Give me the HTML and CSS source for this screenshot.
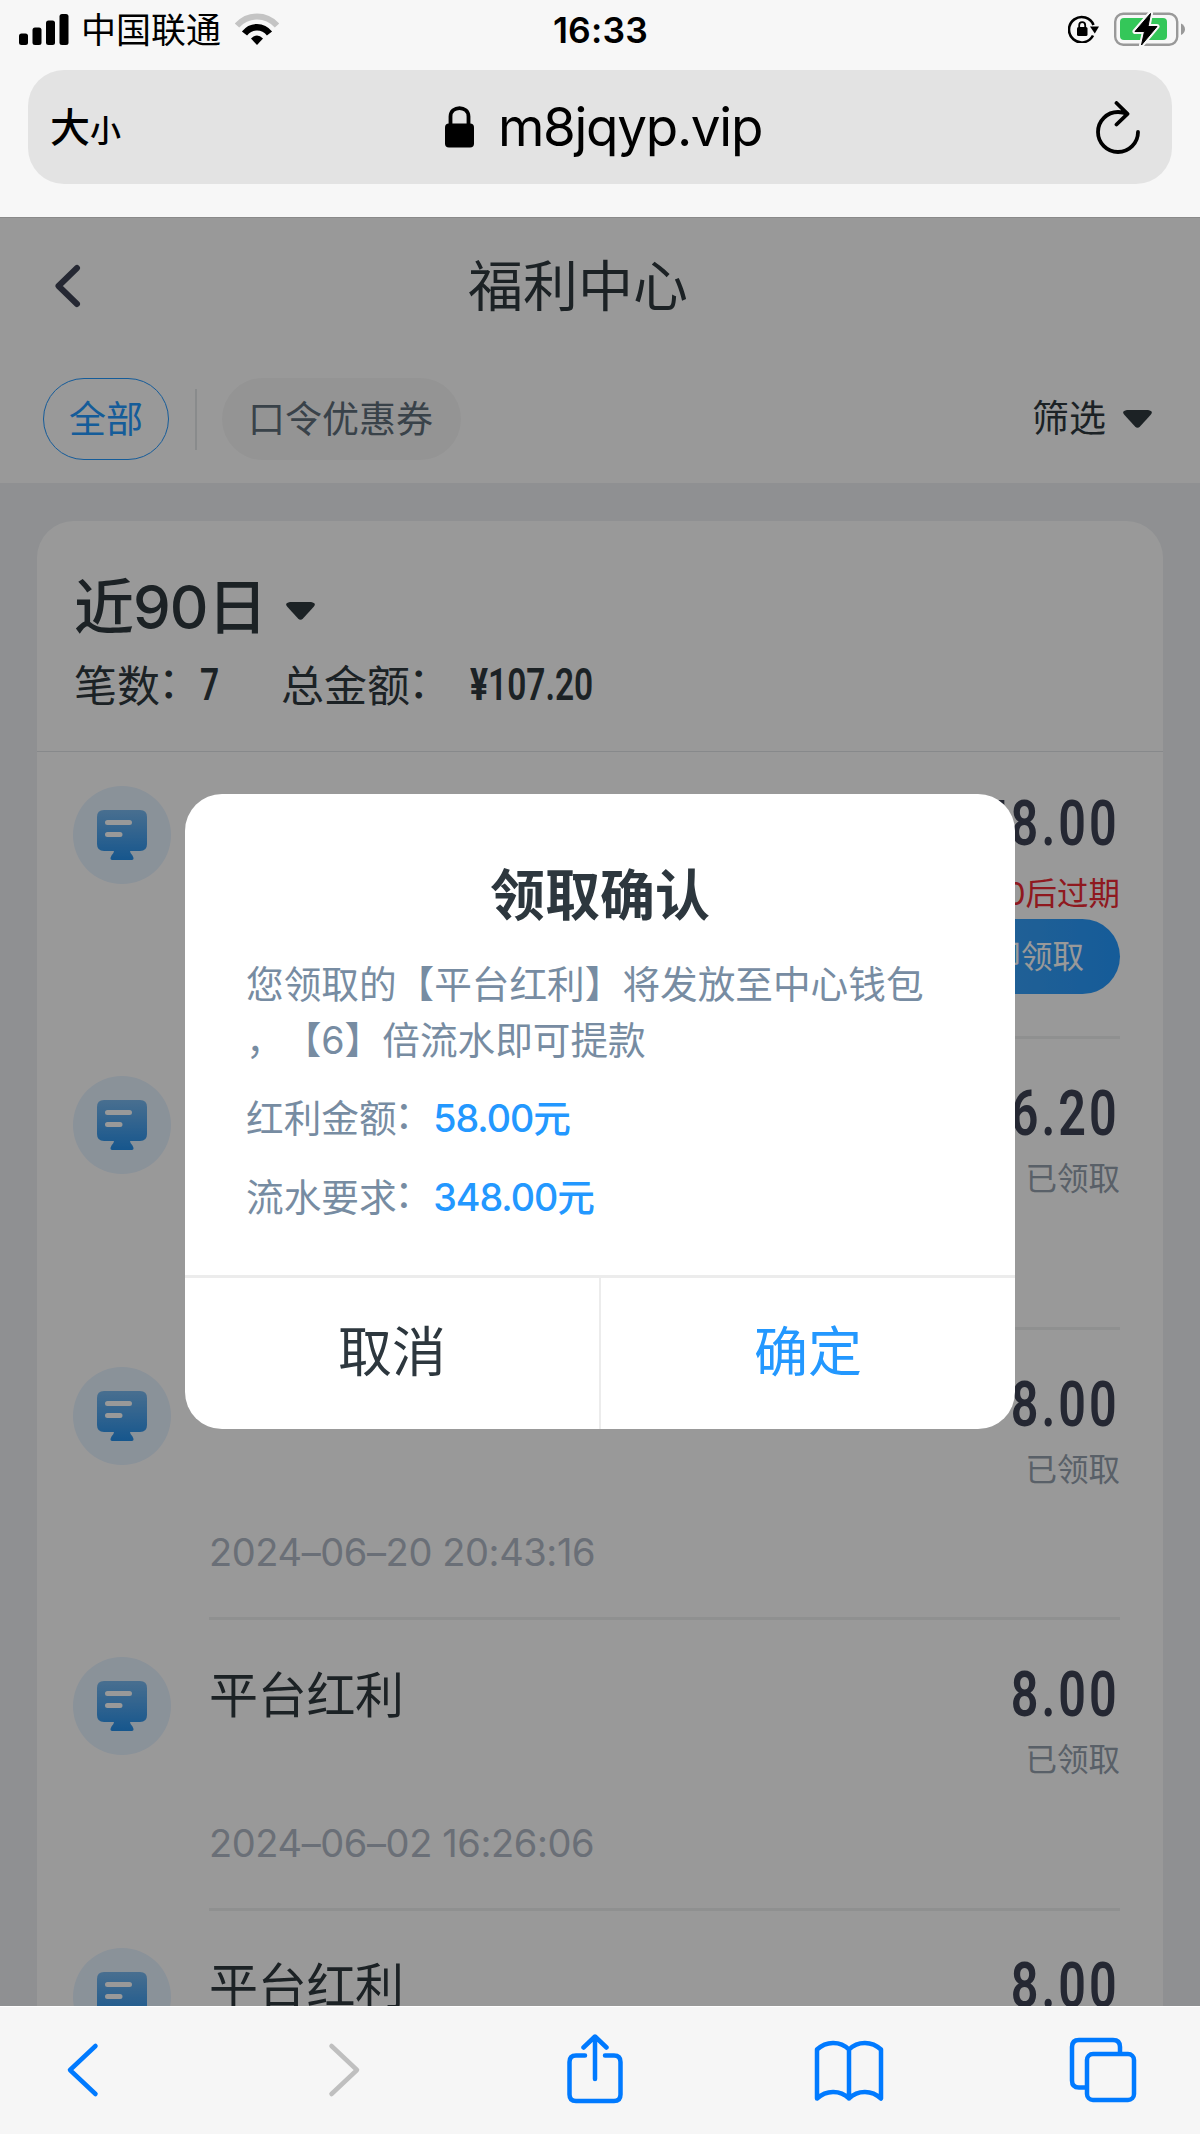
FILE: index.html
```html
<!DOCTYPE html>
<html lang="zh-CN">
<head>
<meta charset="utf-8">
<title>福利中心</title>
<link rel="stylesheet" href="styles.css">
</head>
<body>
<svg class="defs" width="0" height="0" aria-hidden="true">
  <defs>
    <linearGradient id="screen" x1="0" y1="0" x2="0" y2="1">
      <stop offset="0" stop-color="#79b9f0"/><stop offset="1" stop-color="#2590ec"/>
    </linearGradient>
    <symbol id="monitor" viewBox="0 0 50 50">
      <path fill="url(#screen)" d="M7 0H43Q50 0 50 7V34Q50 41 43 41H33Q33 43 35.500 45.500Q38 50 34.500 50H15.500Q12 50 14.500 45.500Q17 43 17 41H7Q0 41 0 34V7Q0 0 7 0Z"/>
      <path stroke="#fff" stroke-width="5" stroke-linecap="round" d="M10.500 12.500H32.500M10.500 24.500H23"/>
    </symbol>
  </defs>
</svg>
<header class="browser-top">
  <div class="status">
    <div class="status-left">
      <svg width="50" height="31" viewBox="0 0 50 31"><rect y="19.500" width="9" height="11.500" rx="2.500"/><rect x="13.500" y="13.500" width="9" height="17.500" rx="2.500"/><rect x="27" y="6.500" width="9" height="24.500" rx="2.500"/><rect x="40.500" width="9" height="31" rx="2.500"/></svg>
      <span class="carrier">中国联通</span>
      <svg class="wifi" width="44" height="32" viewBox="0 0 44 32"><path fill="none" stroke="#c4c4c4" stroke-width="6" d="M2 12.500C13 .5 31 .5 42 12.500"/><path fill="none" stroke="#000" stroke-width="6.500" d="M9.500 20.500C16 12 28 12 34.500 20.500"/><path d="M16 25.500Q22 19.500 28 25.500L22 32Z"/></svg>
    </div>
    <time class="clock">16:33</time>
    <div class="status-right">
      <svg width="31" height="28" viewBox="0 0 31 28"><path fill="none" stroke="#000" stroke-width="2.600" d="M25.500 10A12.700 12.700 0 1 0 25 20.500"/><path d="M22 11.500H31L26.800 18.500Z"/><rect x="9" y="12" width="10.500" height="9" rx="1.500"/><path fill="none" stroke="#000" stroke-width="1.800" d="M11.200 12.500V10.200A3 3 0 0 1 17.200 10.200V12.500"/></svg>
      <svg width="72" height="34" viewBox="0 0 72 34"><rect x="1.200" y="1.700" width="62" height="31" rx="8" fill="none" stroke="#999" stroke-width="2.400"/><rect x="6" y="6" width="47" height="22" rx="4" fill="#34c759"/><path d="M67 11.500Q71 13.500 71 17.200T67 23Z" fill="#999"/><path stroke="#f7f7f7" stroke-width="5" stroke-linejoin="round" d="M36.500 1.500L21 19.500H30.500L27.500 33L43 14.500H34Z"/><path stroke="#000" stroke-linejoin="round" d="M36.500 1.500L21 19.500H30.500L27.500 33L43 14.500H34Z"/></svg>
    </div>
  </div>
  <div class="address">
    <div class="text-size"><span class="ts-big">大</span><span class="ts-small">小</span></div>
    <div class="url"><svg width="29" height="42" viewBox="0 0 29 42"><rect y="17.500" width="29" height="24" rx="4"/><path fill="none" stroke="#000" stroke-width="3.800" d="M5.500 19V10.500C5.500 -.8 23.500 -.8 23.500 10.500V19"/></svg><span class="host">m8jqyp.vip</span></div>
    <svg class="reload" width="44" height="53" viewBox="0 0 44 53" fill="none" stroke="#000" stroke-width="3.800" stroke-linecap="round" stroke-linejoin="round"><path d="M42 31A20 20 0 1 1 22 11Q27 11 31 12.800M20.500 2L31.500 12.800L20.500 23.500"/></svg>
  </div>
</header>

<main class="page">
  <section class="head">
    <div class="titlebar">
      <svg width="27" height="44" viewBox="0 0 27 44" fill="none" stroke="#3f4455" stroke-width="6" stroke-linecap="round" stroke-linejoin="round"><path d="M23 4L4.500 22L23 40"/></svg>
      <h1>福利中心</h1>
    </div>
    <div class="filters">
      <span class="pill pill-active">全部</span>
      <i class="sep"></i>
      <span class="pill">口令优惠券</span>
      <span class="filter">筛选<svg width="29" height="18" viewBox="0 0 29 18"><path fill="#2f393f" d="M4 0H25Q31 1 27.500 5L17 16.500Q14.500 19 12 16.500L1.500 5Q-2 1 4 0Z"/></svg></span>
    </div>
  </section>

  <section class="card">
    <div class="summary">
      <div class="range">近90日<svg width="29" height="18" viewBox="0 0 29 18"><path fill="#2f393f" d="M4 0H25Q31 1 27.500 5L17 16.500Q14.500 19 12 16.500L1.500 5Q-2 1 4 0Z"/></svg></div>
      <div class="totals"><span class="label">笔数<i class="colon">：</i></span><span class="num">7</span><span class="label total-label">总金额<i class="colon">：</i></span><span class="num total"><b>¥</b>107.20</span></div>
    </div>
    <article class="row">
      <div class="badge"><svg width="50" height="50"><use href="#monitor"/></svg></div>
      <div class="info"></div>
      <div class="side"><span class="amount">58.00</span><span class="expiry">0后过期</span><span class="claim">立即领取</span></div>
    </article>
    <article class="row">
      <div class="badge"><svg width="50" height="50"><use href="#monitor"/></svg></div>
      <div class="info"></div>
      <div class="side"><span class="amount">6.20</span><span class="state">已领取</span></div>
    </article>
    <article class="row">
      <div class="badge"><svg width="50" height="50"><use href="#monitor"/></svg></div>
      <div class="info"><time>2024–06–20 20:43:16</time></div>
      <div class="side"><span class="amount">8.00</span><span class="state">已领取</span></div>
    </article>
    <article class="row">
      <div class="badge"><svg width="50" height="50"><use href="#monitor"/></svg></div>
      <div class="info"><h2>平台红利</h2><time>2024–06–02 16:26:06</time></div>
      <div class="side"><span class="amount">8.00</span><span class="state">已领取</span></div>
    </article>
    <article class="row">
      <div class="badge"><svg width="50" height="50"><use href="#monitor"/></svg></div>
      <div class="info"><h2>平台红利</h2></div>
      <div class="side"><span class="amount">8.00</span></div>
    </article>
  </section>

  <div class="overlay">
    <div class="modal">
      <div class="modal-body">
        <h3>领取确认</h3>
        <p class="desc">您领取的【平台红利】将发放至中心钱包<br>，【6】倍流水即可提款</p>
        <p class="line">红利金额<i class="colon">：</i><em>58.00元</em></p>
        <p class="line">流水要求<i class="colon">：</i><em>348.00元</em></p>
      </div>
      <div class="actions"><span>取消</span><span class="ok">确定</span></div>
    </div>
  </div>
</main>

<nav class="toolbar">
  <svg width="34" height="56" viewBox="0 0 34 56"><path d="M29.500 4L4 28L29.500 52"/></svg>
  <svg class="off" width="34" height="56" viewBox="0 0 34 56"><path d="M4.500 4L30 28L4.500 52"/></svg>
  <svg width="56" height="70" viewBox="0 0 56 70"><path d="M18 21.500H9Q2.500 21.500 2.500 28V60.500Q2.500 67 9 67H47Q53.500 67 53.500 60.500V28Q53.500 21.500 47 21.500H38M28 45V3M16.500 13.500L28 2.500L39.500 13.500"/></svg>
  <svg width="70" height="62" viewBox="0 0 70 62"><path d="M35 9.500C26 .5 12 1 3 9.500V58.500C12 50 26 49.500 35 58.500C44 49.500 58 50 67 58.500V9.500C58 1 44 .5 35 9.500V58.500"/></svg>
  <svg width="68" height="66" viewBox="0 0 68 66"><path d="M17 50.500H10Q3 50.500 3 43.500V10Q3 3 10 3H44Q51 3 51 10V16"/><rect x="18" y="17" width="47" height="46" rx="6"/></svg>
</nav>
</body>
</html>
```
FILE: styles.css
```css
* { box-sizing: border-box; margin: 0; padding: 0; }
body {
  width: 1200px; height: 2134px; overflow: hidden;
  display: flex; flex-direction: column;
  background: #f7f7f7; color: #2f393f;
  font-family: Inter, "Noto Sans CJK SC", sans-serif;
}
svg { display: block; flex: none; }
.defs { position: absolute; }
h1, h2, h3, em { font-weight: 400; font-style: normal; }
.colon { font-style: normal; line-height: 0; vertical-align: 4px; margin: 0 2px 0 -2px; }

/* Browser chrome */
.browser-top { height: 218px; flex: none; color: #000; border-bottom: 1px solid #8a8a8a; }
.status { height: 70px; padding: 0 14px 12px 19px; display: grid; grid-template-columns: 1fr auto 1fr; align-items: center; }
.status-left { display: flex; align-items: center; }
.carrier { font-size: 35px; line-height: 40px; margin-left: 12px; padding-top: 2px; }
.wifi { margin-left: 14px; }
.clock { font-size: 35.500px; font-weight: 600; line-height: 40px; padding-top: 4px; margin-left: -4px; letter-spacing: .2px; }
.status-right { display: flex; align-items: center; justify-content: flex-end; gap: 15px; }
.address {
  height: 114px; margin: 0 28px; padding: 0 32px 0 22px; border-radius: 36px; background: #e3e3e3;
  display: grid; grid-template-columns: 1fr auto 1fr; align-items: center;
}
.text-size { display: flex; align-items: baseline; font-weight: 500; padding-top: 2px; }
.ts-big { font-size: 40px; line-height: 56px; }
.ts-small { font-size: 31px; }
.url { display: flex; align-items: center; gap: 24px; padding-left: 17px; }
.host { font-size: 53px; line-height: 60px; letter-spacing: -1.300px; }
.reload { justify-self: end; }

/* Page */
.page { height: 1788px; flex: none; position: relative; overflow: hidden; background: #eef1f4; }
.head { height: 265px; background: #fff; }
.titlebar { height: 135px; padding-left: 54px; display: flex; align-items: center; }
.titlebar h1 { font-size: 55px; line-height: 80px; margin-left: 387px; }
.filters { height: 131px; padding: 25px 48px 24px 43px; display: flex; align-items: center; font-size: 37px; }
.pill { height: 82px; padding: 0 28px 0 26px; border-radius: 41px; background: #f7f7f7; color: #5f6e7b; line-height: 84px; }
.pill-active { border: 1px solid #2499ff; background: #fff; color: #2499ff; padding: 0 25px; line-height: 82px; }
.sep { width: 2px; height: 61px; margin: 0 25px 0 26px; background: #e4e8ea; }
.filter { margin-left: auto; display: flex; align-items: center; gap: 17px; line-height: 50px; }

.card { margin: 38px 37px 0 37px; background: #fff; border-radius: 37px 37px 0 0; height: 1600px; }
.summary { height: 231px; padding: 46px 37px 0; border-bottom: 1px solid #e2e5e8; }
.range { display: flex; align-items: center; gap: 19px; font-size: 60px; font-weight: 500; line-height: 80px; letter-spacing: -1px; }
.range svg { margin-top: 7px; }
.totals { display: flex; align-items: center; height: 71px; font-size: 43px; }
.label { white-space: nowrap; }
.total-label { margin-left: 59px; }
.num { font-family: Roboto, sans-serif; font-size: 43.500px; font-weight: 600; transform: scaleX(.77); transform-origin: 0 50%; width: 22px; margin-left: -3px; padding-top: 5px; white-space: nowrap; }
.total { margin-left: 17px; }
.total b { font-weight: 800; }
.row { height: 290.400px; padding: 34px 43px 0 36px; display: flex; }
.badge { width: 98px; height: 98px; flex: none; border-radius: 50%; background: #e6f3ff; display: flex; align-items: center; justify-content: center; }
.info, .side { height: 253.400px; border-bottom: 3px solid #eef0f1; display: flex; flex-direction: column; }
.info { flex: 1; margin-left: 38px; }
.info h2 { font-size: 49px; line-height: 78px; letter-spacing: -.3px; }
.info time { margin: auto 0 37px; font-size: 38px; line-height: 56px; color: #b1b9c6; letter-spacing: -.4px; }
.side { width: 198px; align-items: flex-end; }
.amount { font-family: Roboto, sans-serif; font-size: 63px; font-weight: 600; line-height: 75px; letter-spacing: 4px; color: #3f4455; transform: scaleX(.77); transform-origin: 100% 50%; }
.expiry, .state, .claim { font-size: 31.500px; white-space: nowrap; flex: none; }
.expiry { color: #ee2b35; line-height: 44px; margin-top: 11px; }
.state { color: #94a0ad; line-height: 44px; margin-top: 6px; }
.claim { width: 198px; height: 75px; margin-top: 3px; border-radius: 38px; line-height: 75px; text-align: center; color: #fff; background: linear-gradient(90deg, #46a6f5, #2499ff); }

/* Confirmation dialog */
.overlay { position: absolute; inset: 0; background: rgba(0, 0, 0, .4); padding: 576px 185px 0; }
.modal { height: 635px; border-radius: 37px; overflow: hidden; background: #fff; }
.modal-body { height: 481px; padding: 61px 61px 0; color: #778ca2; font-size: 37.650px; }
.modal h3 { text-align: center; font-size: 55px; line-height: 80px; font-weight: 700; color: #2d373e; }
.desc { margin-top: 22px; line-height: 55.500px; white-space: nowrap; text-spacing-trim: space-all; }
.line { line-height: 56px; margin-top: 23px; }
.line em { color: #2398ff; font-weight: 500; letter-spacing: -1px; margin-left: -1px; }
.actions { height: 154px; border-top: 3px solid #ececec; display: flex; }
.actions span { flex: 1; text-align: center; font-size: 54px; line-height: 150px; color: #2d373e; }
.actions .ok { border-left: 2px solid #ececec; color: #2398ff; }

/* Bottom toolbar */
.toolbar { flex: 1; padding: 27px 60px 0 66px; border-top: 1px solid #fff; display: grid; grid-template-columns: 261px 240px 247px 255px 68px; align-items: start; background: #f6f6f6; }
.toolbar svg { fill: none; stroke: #007aff; stroke-width: 4.500; stroke-linecap: round; stroke-linejoin: round; }
.toolbar svg:nth-child(-n+2) { margin-top: 8px; }
.toolbar svg:nth-child(4) { margin-top: 6px; }
.toolbar svg:nth-child(5) { margin-top: 3px; }
.toolbar .off { stroke: #bfbfbf; }
```
